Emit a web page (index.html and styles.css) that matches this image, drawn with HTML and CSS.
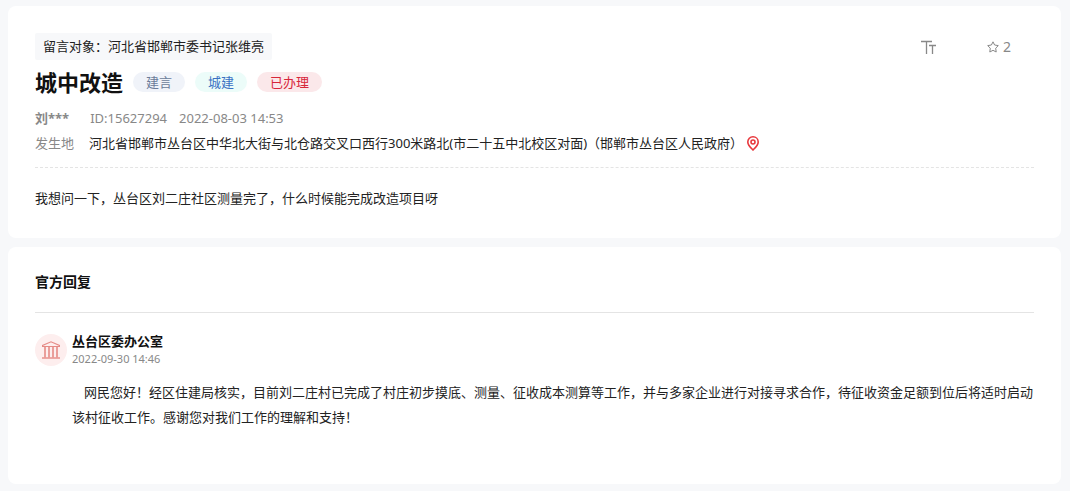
FILE: index.html
```html
<!DOCTYPE html>
<html lang="zh-CN">
<head>
    <meta charset="UTF-8">
    <meta name="viewport" content="width=device-width, initial-scale=1.0">
    <title>城中改造</title>
    <link rel="stylesheet" href="styles.css">
</head>
<body>
    <main class="page">
        <article class="card message">
            <div class="message-top">
                <p class="target">留言对象：河北省邯郸市委书记张维亮</p>
                <div class="tools">
                    <button type="button" class="tool" aria-label="字体大小">
                        <svg width="16" height="14" viewBox="0 0 16 14" fill="none" stroke="currentColor" stroke-width="1.3">
                            <path d="M0 1.5H11M5.5 1.5V14M8 5.5H15M11.5 5.5V14"/>
                        </svg>
                    </button>
                    <button type="button" class="tool">
                        <svg width="12" height="12" viewBox="0 0 12 12" fill="none" stroke="currentColor" stroke-linejoin="round">
                            <path d="M6 0.8L7.6 4L11.3 4.6L8.7 7.2L9.2 11L6 9.3L2.8 11L3.3 7.2L0.7 4.6L4.4 4Z"/>
                        </svg>
                        <span>2</span>
                    </button>
                </div>
            </div>
            <div class="title-row">
                <h1>城中改造</h1>
                <ul class="tags">
                    <li class="tag tag-type">建言</li>
                    <li class="tag tag-field">城建</li>
                    <li class="tag tag-state">已办理</li>
                </ul>
            </div>
            <div class="meta">
                <strong class="author">刘***</strong>
                <span>ID:15627294</span>
                <time>2022-08-03 14:53</time>
            </div>
            <div class="place">
                <span class="place-label">发生地</span>
                <span>河北省邯郸市丛台区中华北大街与北仓路交叉口西行300米路北(市二十五中北校区对面)（邯郸市丛台区人民政府）</span>
                <svg class="pin" width="12" height="15" viewBox="0 0 12 15" fill="none" stroke="currentColor" stroke-width="1.6">
                    <path d="M6 14C3.6 11.6 0.8 9.2 0.8 5.9C0.8 3 3.1 0.8 6 0.8S11.2 3 11.2 5.9C11.2 9.2 8.4 11.6 6 14Z"/>
                    <circle cx="6" cy="6" r="2"/>
                </svg>
            </div>
            <p class="content">我想问一下，丛台区刘二庄社区测量完了，什么时候能完成改造项目呀</p>
        </article>

        <section class="card reply">
            <h2>官方回复</h2>
            <div class="reply-item">
                <div class="avatar">
                    <svg width="18" height="18" viewBox="0 0 18 18" fill="none" stroke="currentColor">
                        <path d="M0.5 5.5V4.5L9 0.8L17.5 4.5V5.5Z" stroke-width="1.2"/>
                        <path d="M3 5.5V16.5M7 5.5V16.5M11 5.5V16.5M15 5.5V16.5" stroke-width="1.6"/>
                        <path d="M0 17H18" stroke-width="1.4"/>
                    </svg>
                </div>
                <div class="reply-main">
                    <h3>丛台区委办公室</h3>
                    <time class="reply-time">2022-09-30 14:46</time>
                    <p class="reply-text">网民您好！经区住建局核实，目前刘二庄村已完成了村庄初步摸底、测量、征收成本测算等工作，并与多家企业进行对接寻求合作，待征收资金足额到位后将适时启动该村征收工作。感谢您对我们工作的理解和支持！</p>
                </div>
            </div>
        </section>
    </main>
</body>
</html>
```
FILE: styles.css
```css
* {
    box-sizing: border-box;
}
body {
    margin: 0;
    background-color: #f7f8fa;
    color: #222222;
    font-family: 'Noto Sans', 'Noto Sans CJK SC', sans-serif;
    font-size: 13px;
    line-height: 25px;
}
h1, h2, h3, p, ul {
    margin: 0;
    padding: 0;
}
.page {
    display: flex;
    flex-direction: column;
    gap: 9px;
    padding: 6px 9px 7px 8px;
}
.card {
    background-color: #ffffff;
    border-radius: 8px;
    padding: 27px;
}
.message-top {
    display: flex;
    justify-content: space-between;
    align-items: center;
}
.target {
    padding: 1px 8px;
    background-color: #f7f8fa;
    border-radius: 2px;
}
.tools {
    display: flex;
    gap: 50px;
    padding-right: 23px;
}
.tool {
    display: flex;
    align-items: center;
    gap: 4px;
    padding: 0;
    border: none;
    background: none;
    color: #888888;
    font-family: inherit;
    font-size: 14px;
    cursor: pointer;
}
.title-row {
    display: flex;
    align-items: center;
    gap: 10px;
    padding: 6px 0 8px;
}
h1 {
    font-size: 22px;
    line-height: 32px;
    color: #111111;
}
.tags {
    display: flex;
    gap: 10px;
    list-style: none;
}
.tag {
    padding: 0 13px;
    border-radius: 10px;
    line-height: 20px;
}
.tag-type {
    background-color: #f0f3f9;
    color: #6b7c99;
}
.tag-field {
    background-color: #ecfcf9;
    color: #3a72c4;
}
.tag-state {
    background-color: #fbe8ea;
    color: #d7263a;
}
.meta {
    display: flex;
    gap: 12px;
    color: #888888;
}
.author {
    margin-right: 9px;
}
.place {
    display: flex;
    align-items: center;
    gap: 4px;
    padding-bottom: 11px;
    border-bottom: 1px dashed #e4e4e4;
}
.place-label {
    margin-right: 11px;
    color: #888888;
}
.pin {
    flex-shrink: 0;
    color: #e8383d;
}
.content {
    padding-top: 18px;
}
.reply {
    padding-top: 22px;
    padding-bottom: 54px;
}
.reply h2 {
    padding-bottom: 18px;
    border-bottom: 1px solid #e4e4e4;
    font-size: 14px;
    color: #111111;
}
.reply-item {
    display: flex;
    gap: 5px;
    padding-top: 21px;
}
.avatar {
    display: flex;
    justify-content: center;
    align-items: center;
    flex-shrink: 0;
    width: 32px;
    height: 32px;
    border-radius: 50%;
    background-color: #fdeeee;
    color: #e58a86;
}
.reply-main {
    flex: 1;
}
.reply-main h3 {
    font-size: 13px;
    line-height: 14px;
    color: #111111;
}
.reply-time {
    display: block;
    padding-top: 2px;
    font-size: 11px;
    line-height: 18px;
    color: #888888;
}
.reply-text {
    padding-top: 12px;
    text-indent: 12px;
}
```
